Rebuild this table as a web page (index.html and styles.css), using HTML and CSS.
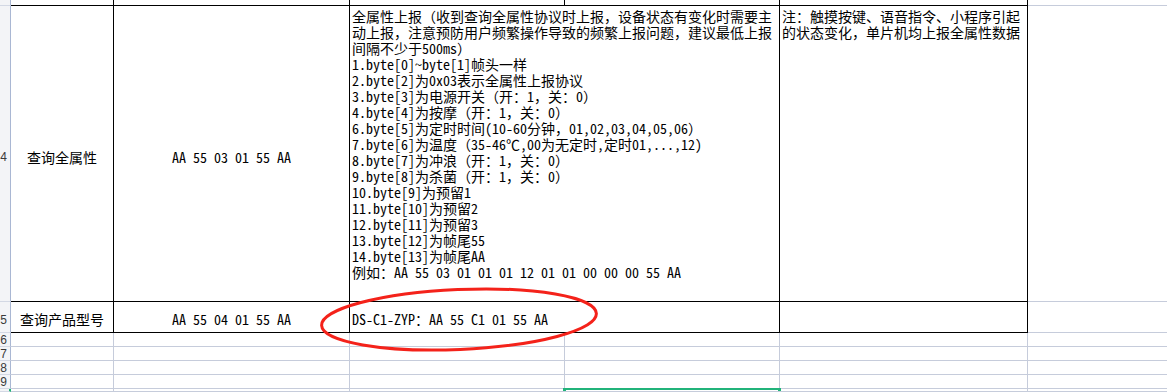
FILE: index.html
```html
<!DOCTYPE html>
<html lang="zh">
<head>
<meta charset="utf-8">
<title>Sheet</title>
<link rel="stylesheet" href="styles.css">
</head>
<body>
<div class="sheet">
  <!-- row 3 (partially visible) -->
  <div class="hd"></div>
  <div class="c tb"></div>
  <div class="c tb"></div>
  <div class="c tb"></div>
  <div class="c tb"></div>
  <div class="c tb"></div>
  <div class="c gb"></div>

  <!-- row 4 -->
  <div class="hd"><span class="num">4</span></div>
  <div class="c tb mid name">查询全属性</div>
  <div class="c tb mid code">AA 55 03 01 55 AA</div>
  <div class="c tb span2 txt">
    <div class="ln">全属性上报（收到查询全属性协议时上报，设备状态有变化时需要主</div>
    <div class="ln">动上报，注意预防用户频繁操作导致的频繁上报问题，建议最低上报</div>
    <div class="ln">间隔不少于500ms）</div>
    <div class="ln">1.byte[0]~byte[1]帧头一样</div>
    <div class="ln">2.byte[2]为0x03表示全属性上报协议</div>
    <div class="ln">3.byte[3]为电源开关（开：1，关：0）</div>
    <div class="ln">4.byte[4]为按摩（开：1，关：0）</div>
    <div class="ln">6.byte[5]为定时时间(10-60分钟，01,02,03,04,05,06）</div>
    <div class="ln">7.byte[6]为温度（35-46℃,00为无定时,定时01,...,12)</div>
    <div class="ln">8.byte[7]为冲浪（开：1，关：0）</div>
    <div class="ln">9.byte[8]为杀菌（开：1，关：0）</div>
    <div class="ln">10.byte[9]为预留1</div>
    <div class="ln">11.byte[10]为预留2</div>
    <div class="ln">12.byte[11]为预留3</div>
    <div class="ln">13.byte[12]为帧尾55</div>
    <div class="ln">14.byte[13]为帧尾AA</div>
    <div class="ln">例如：AA 55 03 01 01 01 12 01 01 00 00 00 55 AA</div>
  </div>
  <div class="c tb txt">
    <div class="ln">注：触摸按键、语音指令、小程序引起</div>
    <div class="ln">的状态变化，单片机均上报全属性数据</div>
  </div>
  <div class="c gb"></div>

  <!-- row 5 -->
  <div class="hd"><span class="num">5</span></div>
  <div class="c tb mid name short">查询产品型号</div>
  <div class="c tb mid code short">AA 55 04 01 55 AA</div>
  <div class="c tb span2 line short">DS-C1-ZYP：AA 55 C1 01 55 AA</div>
  <div class="c tb"></div>
  <div class="c gb"></div>

  <!-- rows 6-9 -->
  <div class="hd small"><span class="num">6</span></div>
  <div class="c g"></div><div class="c g"></div><div class="c g"></div><div class="c g"></div><div class="c g"></div><div class="c gb"></div>
  <div class="hd small"><span class="num">7</span></div>
  <div class="c g"></div><div class="c g"></div><div class="c g"></div><div class="c g"></div><div class="c g"></div><div class="c gb"></div>
  <div class="hd small"><span class="num">8</span></div>
  <div class="c g"></div><div class="c g"></div><div class="c g"></div><div class="c g"></div><div class="c g"></div><div class="c gb"></div>
  <div class="hd small"><span class="num">9</span></div>
  <div class="c g"></div><div class="c g"></div><div class="c g"></div><div class="c g"></div><div class="c g"></div><div class="c gb"></div>

  <!-- row 10 (selected) -->
  <div class="hd sel-hd"></div>
  <div class="c g"></div><div class="c g"></div><div class="c g"></div><div class="c g selected"></div><div class="c g"></div><div class="c gb"></div>
</div>

<svg class="mark" width="1167" height="392" viewBox="0 0 1167 392" aria-hidden="true">
  <ellipse cx="459" cy="319.5" rx="137.5" ry="30" transform="rotate(-2.5 459 319.5)" fill="none" stroke="#f4221a" stroke-width="3"/>
</svg>
</body>
</html>
```

FILE: styles.css
```css
* { box-sizing: border-box; }

html, body {
  margin: 0;
  padding: 0;
  background: #ffffff;
  overflow: hidden;
}

body {
  position: relative;
  width: 1167px;
  height: 392px;
}

.sheet {
  display: grid;
  grid-template-columns: 11px 103px 236px 215px 215px 248px 1fr;
  grid-template-rows: 6px 296px 31px 14px 14px 14px 14px 1fr;
  width: 1167px;
  height: 392px;
  overflow: hidden;
  font-family: "Noto Sans Mono CJK SC", "Noto Sans CJK SC", monospace;
  font-size: 14px;
  line-height: 16px;
  color: #000;
}

.hd {
  background: #f3f4f7;
  border-right: 1px solid #a9b7d3;
  border-bottom: 1px solid #d3d8e4;
  display: flex;
  align-items: center;
  justify-content: flex-end;
  overflow: hidden;
  padding-right: 3px;
}

.hd .num {
  font-family: "Liberation Sans", Arial, sans-serif;
  font-size: 12px;
  line-height: 12px;
  color: #3a3a3a;
  padding-top: 6px;
}

.hd.small .num { padding-top: 1px; }

.sel-hd {
  border-right: 2px solid #21b37a;
}

.c {
  border-right: 1px solid #c6ccdb;
  border-bottom: 1px solid #c6ccdb;
  min-width: 0;
  white-space: nowrap;
}

.c.tb {
  border-right-color: #000;
  border-bottom-color: #000;
}

.c.gb {
  border-right: 0;
  border-bottom-color: #c6ccdb;
}

.span2 { grid-column: span 2; }

.mid {
  display: flex;
  align-items: center;
  justify-content: center;
  padding-top: 7px;
}

.mid.short { padding-top: 3px; }

.txt {
  padding: 2px 0 0 2px;
}

.ln {
  height: 16px;
  line-height: 16px;
}

.line {
  display: flex;
  align-items: center;
  padding: 3px 0 0 2px;
}

.selected {
  position: relative;
}

.selected::after {
  content: "";
  position: absolute;
  left: -2px;
  top: -1px;
  right: -2px;
  bottom: 0;
  border: 3px solid #21b37a;
  border-top-width: 2px;
  border-bottom: 0;
}

.mark {
  position: absolute;
  left: 0;
  top: 0;
  pointer-events: none;
}
```
